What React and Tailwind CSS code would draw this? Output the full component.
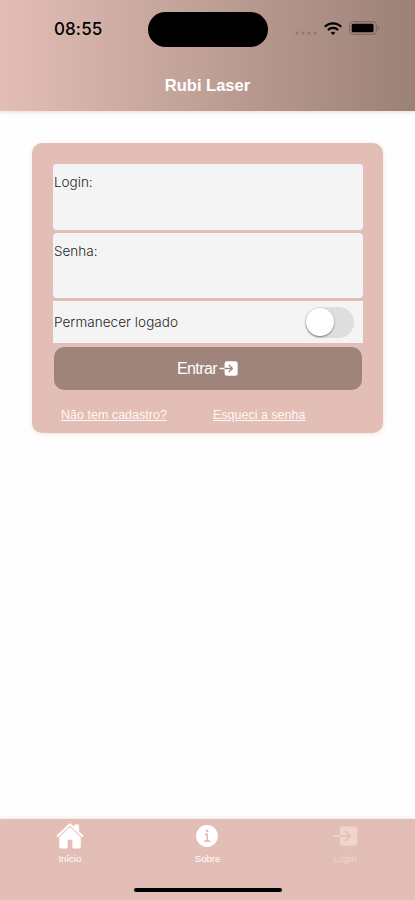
import { IoEnter, IoHome, IoInformationCircle } from 'react-icons/io5';

const TABS = [
  { icon: IoHome, label: 'Início', stroke: 10 },
  { icon: IoInformationCircle, label: 'Sobre', stroke: 0 },
  { icon: IoEnter, label: 'Login', stroke: 0, active: true },
];

function StatusBar() {
  return (
    <div className="flex h-[58px] items-center pl-[54px] pr-[35px]">
      <span className="mt-px w-[94px] font-['Inter',sans-serif] text-[17px] font-medium tracking-[0.1px] text-black">08:55</span>
      <div className="h-[35px] w-[120px] rounded-full bg-black" />
      <div className="ml-auto flex items-center">
        <svg width="22" height="4" viewBox="0 0 22 4" className="mr-[7px] mt-[8px]" fill="#8d7770">
          <circle cx="2" cy="2" r="1.5" />
          <circle cx="8" cy="2" r="1.5" />
          <circle cx="14" cy="2" r="1.5" />
          <circle cx="20" cy="2" r="1.5" />
        </svg>
        <svg width="18" height="13" viewBox="0 0 18 13" className="mr-[7px] mt-[-2px]" fill="none" stroke="#000" strokeWidth="2.2">
          <path d="M.8 4.8C5.4.1 12.6.1 17.2 4.8" />
          <path d="M3.9 8c2.9-2.8 7.3-2.8 10.2 0" />
          <path d="M9 13 6.7 10.7c1.2-1.3 3.4-1.3 4.6 0Z" fill="#000" stroke="none" />
        </svg>
        <svg width="31" height="14" viewBox="0 0 31 14" className="-mt-[3px]">
          <rect x=".6" y=".6" width="26.8" height="12.8" rx="3.8" fill="none" stroke="#806a63" strokeWidth="1.1" />
          <rect x="2.7" y="2.7" width="21.8" height="8.6" rx="1.5" />
          <path d="M28.7 4.7c2.1.8 2.1 3.8 0 4.6Z" fill="#806a63" />
        </svg>
      </div>
    </div>
  );
}

function Field({ label, type }) {
  return (
    <label className="block h-[65.5px] rounded-[4px] bg-[#f4f4f4] pl-px pt-[8px] text-[13.5px] leading-[20px]">
      {label}
      <input type={type} className="block w-full bg-transparent outline-none" />
    </label>
  );
}

function LoginCard() {
  return (
    <form className="mx-8 mt-8 h-[290px] rounded-[10px] bg-[#e3beb6] pl-[21px] pr-5 pt-[21px] font-['Inter',sans-serif] font-light text-[#252525] shadow-[0_1px_5px_#f5e3d9]">
      <div className="flex flex-col gap-[3px]">
        <Field label="Login:" type="text" />
        <Field label="Senha:" type="password" />
        <div className="flex h-[42px] items-center justify-between bg-[#f4f4f4] pl-px pr-[9px] text-[13.5px]">
          <span className="tracking-[0.06px]">Permanecer logado</span>
          <button type="button" role="switch" aria-checked="false" className="flex h-[31px] w-[49px] items-center rounded-full bg-[#dedede]">
            <span className="ml-px size-7 rounded-full bg-white shadow-[0_1px_2px_#777]" />
          </button>
        </div>
      </div>
      <button type="submit" className="mx-px mt-1 flex h-[43px] w-[308px] items-center justify-center rounded-[10px] bg-[#9e847b] font-['Liberation_Sans',sans-serif] text-[16px] font-normal tracking-[-0.6px] text-white">
        Entrar
        <IoEnter size={21} className="ml-px -mt-px" />
      </button>
      <div className="mt-[17px] flex pl-2 font-['Liberation_Sans',sans-serif] text-[12.5px] font-normal leading-4 text-[#fff8f4] underline">
        <a href="#" className="w-[152px] tracking-[0.02px]">Não tem cadastro?</a>
        <a href="#">Esqueci a senha</a>
      </div>
    </form>
  );
}

function TabBar() {
  return (
    <nav className="h-[81px] bg-[#e3beb6] shadow-[0_0_4px_#e7d7d2]">
      <div className="grid h-[69px] grid-cols-3 px-px">
        {TABS.map(({ icon: Icon, label, stroke, active }) => (
          <div key={label} className={active ? 'flex flex-col items-center pt-[3px] text-[#f0d5cc]' : 'flex flex-col items-center pt-[3px] text-white'}>
            <Icon size={28} strokeWidth={stroke} />
            <span className="mt-[3px] font-['Liberation_Sans',sans-serif] text-[9.5px] leading-3">{label}</span>
          </div>
        ))}
      </div>
      <div className="mx-auto h-[4px] w-[148px] rounded-full bg-black" />
    </nav>
  );
}

export default function App() {
  return (
    <div className="flex h-[900px] w-[415px] flex-col overflow-hidden bg-[#fefefe]">
      <header className="h-[111px] bg-linear-to-r from-[#e3beb6] to-[#9c8177] shadow-[0_1px_4px_#ecd8cb]">
        <StatusBar />
        <h1 className="mt-[15px] text-center font-['Liberation_Sans',sans-serif] text-[16.5px] font-bold leading-6 text-white">Rubi Laser</h1>
      </header>
      <main className="flex-1">
        <LoginCard />
      </main>
      <TabBar />
    </div>
  );
}
